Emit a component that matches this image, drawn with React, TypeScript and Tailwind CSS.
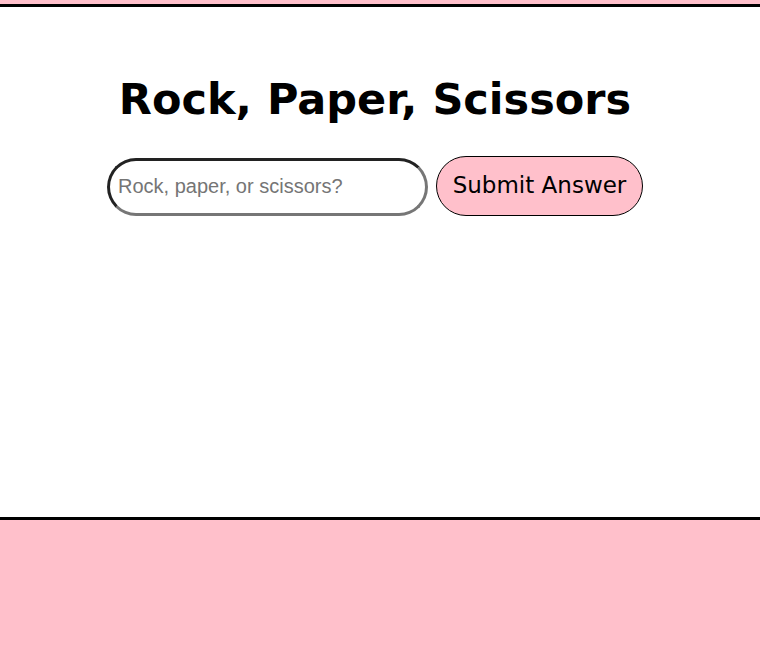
export default function App() {
  return (
    <div className="min-h-[646px] bg-[#ffc0cb] pt-[4px] pb-[126px]">
      <main className="bg-white border-y-[3px] border-black h-[516px]">
        <div className="flex flex-col items-center pr-[10px]">
          <h1
            className="mt-[67px] text-[43px] font-bold leading-[1.2] text-black"
            style={{ fontFamily: '"DejaVu Sans", sans-serif' }}
          >
            Rock, Paper, Scissors
          </h1>
          <form className="mt-[30px] flex items-end gap-[8px]" onSubmit={(e) => e.preventDefault()}>
            <input
              type="text"
              placeholder="Rock, paper, or scissors?"
              className="w-[321px] h-[58px] rounded-[29px] border-[3px] border-t-[#222] border-l-[#222] border-b-[#767676] border-r-[#767676] px-[8px] text-[20px] text-black placeholder:text-[#757575] outline-none"
              style={{ fontFamily: '"Liberation Sans", Arial, sans-serif' }}
            />
            <button
              type="submit"
              className="w-[207px] h-[60px] rounded-[30px] border border-black bg-[#ffc0cb] text-[23px] text-black"
              style={{ fontFamily: '"DejaVu Sans", sans-serif' }}
            >
              Submit Answer
            </button>
          </form>
        </div>
      </main>
    </div>
  );
}
